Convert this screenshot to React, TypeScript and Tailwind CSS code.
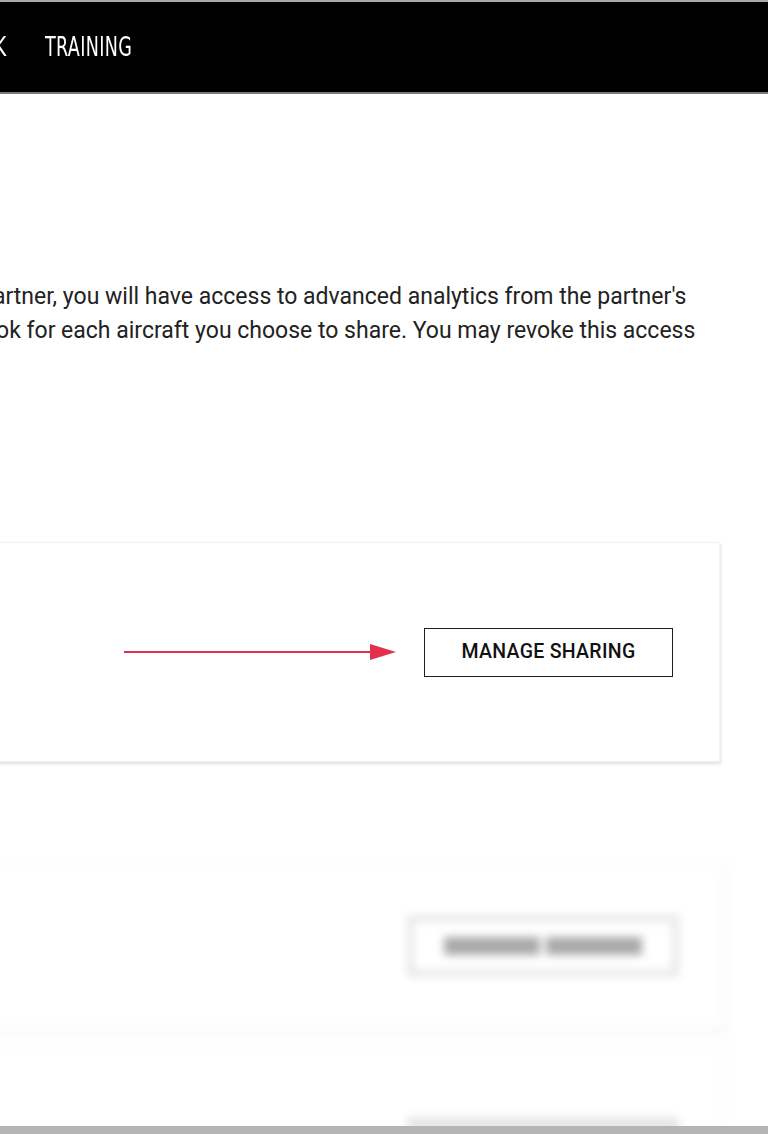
import React from "react";

export default function App() {
  return (
    <div className="relative w-[768px] h-[1134px] overflow-hidden bg-white" style={{ fontFamily: "Roboto, 'Liberation Sans', sans-serif" }}>
      {/* Header */}
      <div className="h-[94px] bg-black border-t-2 border-t-[#a8a8a8] border-b-2 border-b-[#7a7a7a] flex items-center">
        <div className="flex items-center ml-[-6px] gap-[40px] text-white text-[26px] leading-none tracking-[0.5px]" style={{ fontFamily: "'DejaVu Sans Condensed', 'DejaVu Sans', sans-serif" }}>
          <span className="inline-block origin-left scale-x-[0.8] w-[11px]">K</span>
          <span className="inline-block origin-left scale-x-[0.75]">TRAINING</span>
        </div>
      </div>

      {/* Paragraph */}
      <div className="mt-[186px] text-[23px] leading-[34px] text-[#222] whitespace-nowrap">
        <div className="ml-[-20px]">partner, you will have access to advanced analytics from the partner's</div>
        <div className="ml-[-30px]">book for each aircraft you choose to share. You may revoke this access</div>
      </div>

      {/* Card */}
      <div className="mt-[194px] ml-[-20px] w-[740px] h-[220px] bg-white border border-[#f2f2f2] shadow-[1px_2px_3px_rgba(0,0,0,0.12)] flex items-center justify-end pr-[46px]">
        <div className="flex items-center gap-[28px]">
          <svg width="272" height="18" viewBox="0 0 272 18">
            <line x1="0" y1="9" x2="252" y2="9" stroke="#e5304b" strokeWidth="2" />
            <polygon points="246,1 272,9 246,17" fill="#e5304b" />
          </svg>
          <button className="w-[249px] h-[49px] border-[1.5px] border-[#1e1e1e] bg-white text-[19.5px] font-medium text-[#111] tracking-[0.3px]">
            MANAGE SHARING
          </button>
        </div>
      </div>

      {/* Blurred section */}
      <div className="mt-[100px] ml-[-20px] w-[744px] blur-[4px]">
        <div className="h-[168px] bg-white border border-[#f0f0f0] shadow-[1px_2px_4px_rgba(0,0,0,0.06)] flex items-center justify-end pr-[44px]">
          <div className="w-[272px] h-[62px] border-[7px] border-[#e8e8e8] flex items-center justify-center gap-[6px]">
            <div className="w-[96px] h-[18px] bg-[#aaaaaa]" />
            <div className="w-[96px] h-[18px] bg-[#aaaaaa]" />
          </div>
        </div>
        <div className="mt-[12px] h-[90px] bg-white border border-[#f0f0f0] flex items-end justify-end pr-[44px]">
          <div className="w-[272px] h-[14px] bg-[#e6e6e6]" />
        </div>
      </div>
      <div className="absolute left-0 bottom-0 w-[768px] h-[8px] bg-[#b4b4b4]" />
    </div>
  );
}
